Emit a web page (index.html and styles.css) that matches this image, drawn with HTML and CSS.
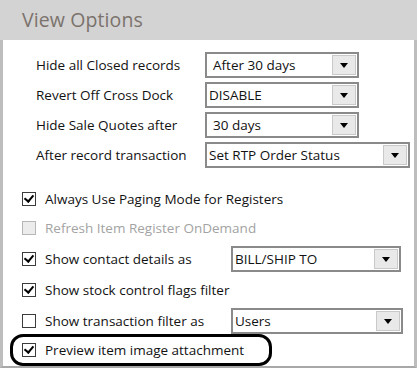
FILE: index.html
```html
<!DOCTYPE html>
<html>
<head>
<meta charset="utf-8">
<link rel="stylesheet" href="styles.css">
</head>
<body>
<div class="panel">
  <div class="header">View Options</div>
  <div class="body">
    <div class="grid">
      <div class="label">Hide all Closed records</div>
      <div class="select w-sm"><span class="val">After 30 days</span><span class="btn"><i class="tri"></i></span></div>
      <div class="label">Revert Off Cross Dock</div>
      <div class="select w-sm"><span class="val tight">DISABLE</span><span class="btn"><i class="tri"></i></span></div>
      <div class="label">Hide Sale Quotes after</div>
      <div class="select w-sm"><span class="val">30 days</span><span class="btn"><i class="tri"></i></span></div>
      <div class="label">After record transaction</div>
      <div class="select w-lg"><span class="val tight">Set RTP Order Status</span><span class="btn"><i class="tri"></i></span></div>
    </div>
    <div class="checks">
      <div class="row r1"><span class="cb on"></span><span class="txt">Always Use Paging Mode for Registers</span></div>
      <div class="row r2"><span class="cb off dis"></span><span class="txt dis">Refresh Item Register OnDemand</span></div>
      <div class="row r3"><span class="cb on"></span><span class="txt fixed">Show contact details as</span>
        <div class="select w-c"><span class="val tight">BILL/SHIP TO</span><span class="btn"><i class="tri"></i></span></div></div>
      <div class="row r4"><span class="cb on"></span><span class="txt">Show stock control flags filter</span></div>
      <div class="row r5"><span class="cb off"></span><span class="txt fixed">Show transaction filter as</span>
        <div class="select w-t"><span class="val tight">Users</span><span class="btn"><i class="tri"></i></span></div></div>
      <div class="row r6 hl"><span class="cb on"></span><span class="txt">Preview item image attachment</span></div>
    </div>
  </div>
</div>
</body>
</html>
```
FILE: styles.css
```css
* { box-sizing: border-box; }
html, body { margin: 0; padding: 0; background: #fff; }
body { width: 417px; height: 370px; overflow: hidden; font-family: "Open Sans", "Noto Sans", sans-serif; color: #121212; }
.panel { width: 417px; height: 368px; border-left: 3px solid #bdbdbd; border-right: 3px solid #bdbdbd; border-bottom: 2px solid #a8a8a8; display: flex; flex-direction: column; }
.header { height: 40px; background: #d3d3d3; margin: 0 -3px; padding-left: 22px; font-size: 19.5px; line-height: 40px; color: #7b726c; letter-spacing: 0.1px; }
.body { flex: 1; padding: 12px 0 0 0; }
.grid { display: grid; grid-template-columns: 202px auto; row-gap: 4px; align-items: center; }
.label { padding-left: 33px; font-size: 13.5px; line-height: 26px; }
.select { height: 26px; border: 2px solid #8a8a8a; background: #fff; display: flex; align-items: stretch; }
.w-sm { width: 154px; }
.w-lg { width: 205px; }
.w-c { width: 170px; }
.w-t { width: 172px; }
.val { flex: 1; font-size: 13.5px; line-height: 22px; padding-left: 6px; white-space: nowrap; overflow: hidden; }
.val.tight { padding-left: 2px; }
.btn { width: 24px; margin: 1px 1px 1px 0; background: #e9e9e9; border: 1px solid #c9c9c9; display: flex; align-items: center; justify-content: center; }
.tri { display: block; width: 0; height: 0; border-left: 4px solid transparent; border-right: 4px solid transparent; border-top: 5px solid #000; margin-top: 1px; }
.checks { display: flex; flex-direction: column; margin-top: 16px; }
.row { display: flex; align-items: center; height: 29px; padding-left: 19px; }
.r2 { height: 29px; }
.r3 { height: 33px; }
.r4 { height: 29px; }
.r5 { height: 33px; }
.r6 { height: 32px; margin-left: 7px; padding-left: 9px; width: 262px; border: 3px solid #000; border-radius: 13px; margin-top: -3px; }
.cb { width: 14px; height: 14px; border: 1px solid #3c3c3c; background: #fff; position: relative; flex: none; }
.cb.on::after { content: ""; position: absolute; left: 3px; top: 0px; width: 4px; height: 7px; border: solid #000; border-width: 0 2.5px 2.5px 0; transform: rotate(40deg); }
.cb.dis { border-color: #b6b6b6; background: #ececec; }
.txt { margin-left: 9px; font-size: 13.5px; white-space: nowrap; }
.txt.dis { color: #a3a3a3; }
.txt.fixed { width: 186px; }
```
